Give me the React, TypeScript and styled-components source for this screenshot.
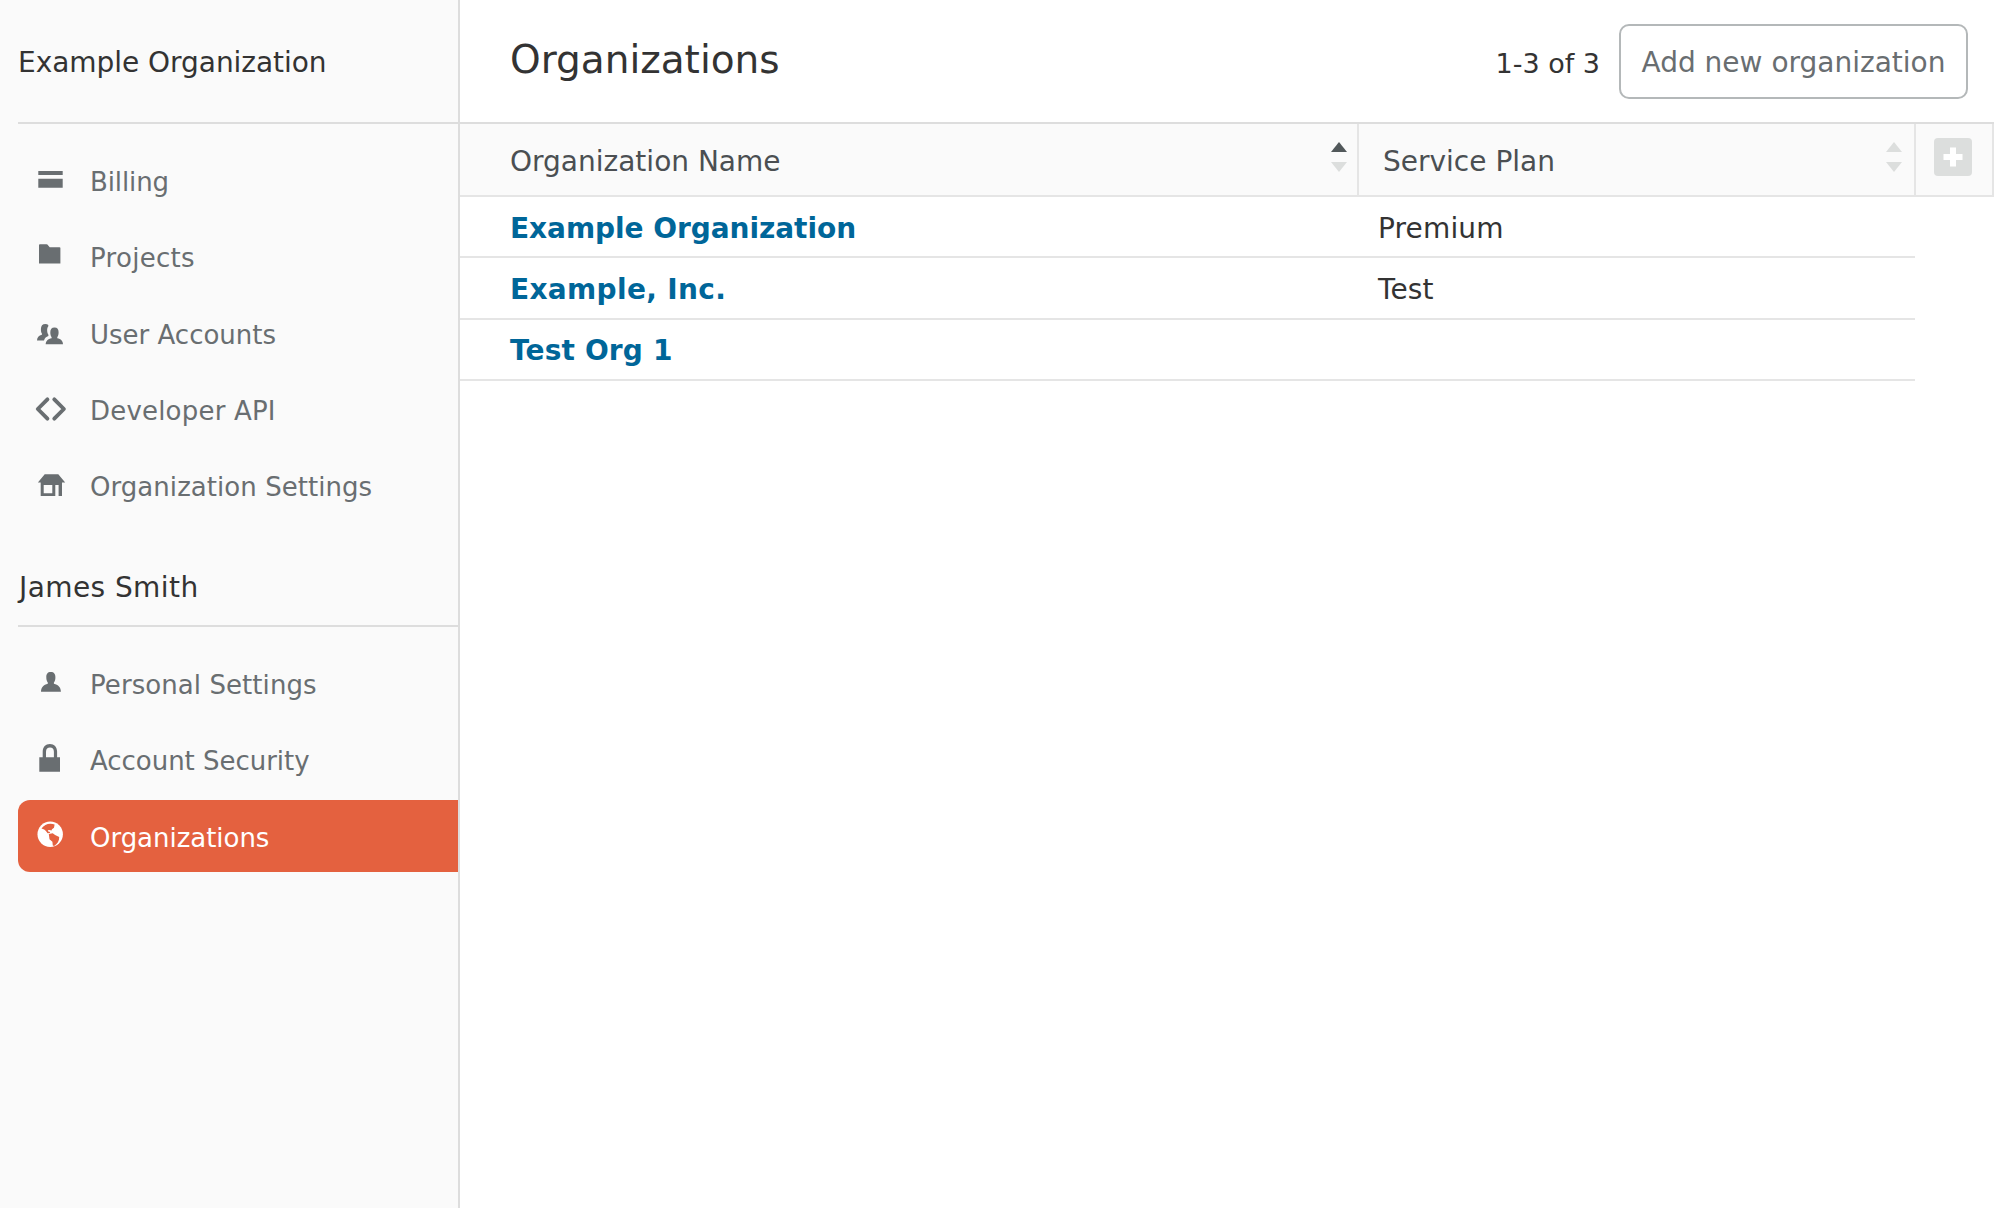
import React from "react";
import styled, { createGlobalStyle } from "styled-components";

const GlobalStyle = createGlobalStyle`
  *, *::before, *::after { box-sizing: border-box; }
  body {
    margin: 0;
    background: #fff;
    color: #333;
    font-family: Verdana, "DejaVu Sans", sans-serif;
  }
`;

const Page = styled.div`
  display: flex;
  width: 100%;
  height: 100vh;
  overflow: hidden;
`;

const Sidebar = styled.aside`
  width: 460px;
  flex: none;
  padding-left: 18px;
  background: #fafafa;
  border-right: 2px solid #ddd;
`;

const SectionTitle = styled.h2<{ $height: number; $lineHeight: number; $tracking?: number; $indent?: number }>`
  margin: 0;
  height: ${(p) => p.$height}px;
  padding-left: ${(p) => p.$indent ?? 0}px;
  border-bottom: 2px solid #ddd;
  font-size: 28px;
  font-weight: 400;
  line-height: ${(p) => p.$lineHeight}px;
  letter-spacing: ${(p) => p.$tracking ?? 0}px;
  white-space: nowrap;
`;

const NavList = styled.nav<{ $gap: number; $bottom?: number }>`
  display: flex;
  flex-direction: column;
  gap: ${(p) => p.$gap}px;
  padding-top: 20px;
  padding-bottom: ${(p) => p.$bottom ?? 0}px;
`;

const NavItem = styled.a<{ $active?: boolean }>`
  display: flex;
  align-items: center;
  gap: 24px;
  height: 72px;
  padding-left: 16px;
  border-radius: 12px 0 0 12px;
  background: ${(p) => (p.$active ? "#e4613f" : "transparent")};
  color: ${(p) => (p.$active ? "#fff" : "#696e71")};
  text-decoration: none;
`;

const NavIcon = styled.svg`
  width: 32px;
  height: 32px;
  flex: none;
  overflow: visible;
`;

const NavLabel = styled.span<{ $tracking?: number }>`
  padding-top: 4px;
  font-size: 26px;
  line-height: 32px;
  letter-spacing: ${(p) => p.$tracking ?? 0}px;
  white-space: nowrap;
`;

const Main = styled.main`
  flex: 1;
  min-width: 0;
`;

const Header = styled.header`
  display: flex;
  align-items: center;
  height: 124px;
  padding: 0 26px 0 50px;
  border-bottom: 2px solid #ddd;
`;

const Title = styled.h1`
  margin: 0;
  flex: 1;
  padding-bottom: 3px;
  font-size: 39px;
  font-weight: 400;
  line-height: 48px;
`;

const Count = styled.span`
  margin-right: 19px;
  padding-top: 6px;
  font-size: 27px;
  line-height: 32px;
`;

const AddButton = styled.button`
  width: 349px;
  height: 75px;
  padding: 4px 0 0;
  border: 2px solid #b4b8b9;
  border-radius: 10px;
  background: #fff;
  color: #696e71;
  font-family: inherit;
  font-size: 28px;
  line-height: 34px;
  white-space: nowrap;
`;

const columns = "899px 557px 78px";

const TableHead = styled.div`
  display: grid;
  grid-template-columns: ${columns};
  height: 73px;
  background: #fafafa;
  border-bottom: 2px solid #e5e5e5;
`;

const HeadCell = styled.div<{ $left: number; $right: number }>`
  display: flex;
  align-items: flex-start;
  justify-content: space-between;
  padding: 14px ${(p) => p.$right}px 0 ${(p) => p.$left}px;
  border-right: 2px solid #e5e5e5;
`;

const HeadLabel = styled.span`
  padding-top: 7px;
  color: #4b4f52;
  font-size: 28px;
  line-height: 34px;
`;

const SortIcon = styled.svg`
  width: 16px;
  height: 30px;
  margin-top: 4px;
`;

const AddColumnIcon = styled.svg`
  width: 38px;
  height: 38px;
`;

const Row = styled.div`
  display: grid;
  grid-template-columns: 918px 1fr;
  width: 1455px;
  height: 61.33px;
  padding-top: 0.66px;
  border-bottom: 2px solid #e5e5e5;
  font-size: 28px;
  line-height: 62px;
`;

const OrgLink = styled.a<{ $tracking: number }>`
  padding-left: 50px;
  color: #069;
  font-weight: 700;
  letter-spacing: ${(p) => p.$tracking}px;
  text-decoration: none;
`;

const PlanCell = styled.span<{ $tracking: number }>`
  letter-spacing: ${(p) => p.$tracking}px;
`;

const BillingIcon = () => (
  <NavIcon viewBox="0 0 32 32" fill="currentColor">
    <path d="M4.3 7h24.4v4H4.3zM4.3 14.8h24.4v9H4.3z" />
  </NavIcon>
);

const FolderIcon = () => (
  <NavIcon viewBox="0 0 32 32" fill="currentColor">
    <path d="M5 5.1q0-.9.9-.9h6.6q.5 0 .9.4l2.300 2.600h9.800q.9 0 .9.9V23.600H5z" />
  </NavIcon>
);

const UsersIcon = () => (
  <NavIcon viewBox="0 0 32 32" fill="currentColor">
    <path d="M20.5 10.500c2.900 0 4.100 2 4.100 4.800 0 2.100-.4 3.800-1.300 4.700v1.200c3.600.6 5.700 2.900 5.700 6H11.700c0-3.100 2.300-5.400 5.900-6v-1.200c-.9-.9-1.300-2.600-1.300-4.700 0-2.800 1.300-4.800 4.200-4.800z" />
    <path d="M11.400 7.100c1.200 0 2.200.3 2.900 1v1.200c-1 1.200-1.300 3-1.100 5 .1 1.600.6 2.700 1.200 3.500v1.200c-2.300.7-3.600 2-4.400 4.500H3c0-3.100 1.800-5.100 4.900-5.800v-1.100c-.7-1-1-2.400-1-4.500 0-3.100 1.500-5 4.500-5z" />
  </NavIcon>
);

const CodeIcon = () => (
  <NavIcon viewBox="0 0 32 32" fill="none" stroke="currentColor" strokeWidth="3.9" strokeLinecap="round" strokeLinejoin="round">
    <path d="M13.400 6.300 3.800 16l9.600 9.700M20.300 6.300 29.900 16l-9.600 9.700" />
  </NavIcon>
);

const StoreIcon = () => (
  <NavIcon viewBox="0 0 32 32" fill="currentColor" fillRule="evenodd">
    <path d="M10.700 5.200h13.600l6.900 8.400H28V27h-3.400V16h-3.300v11H6.700V13.600H3.900zM9.700 16v8.200h8.600V16z" />
  </NavIcon>
);

const PersonIcon = () => (
  <NavIcon viewBox="0 0 32 32" fill="currentColor">
    <path d="M16.800 5c3.300 0 4.600 2 4.600 5.200 0 2.300-.5 4.200-1.500 5.200v1.300c4.300 1 7 3.700 7 8.100H7c0-4.400 2.700-7.100 6.800-8.100v-1.300c-1-1-1.500-2.900-1.500-5.200C12.300 7 13.500 5 16.800 5z" />
  </NavIcon>
);

const LockIcon = () => (
  <NavIcon viewBox="0 0 32 32" fill="currentColor" fillRule="evenodd">
    <path d="M5.300 14.300h3.400V8.500c0-4.500 2.900-7.500 7.200-7.500s7.200 3 7.200 7.500v5.800H26V28.700H5.300zM12 14.300h7.900V8.700c0-2.800-1.500-4.200-3.900-4.200s-4 1.400-4 4.200z" />
  </NavIcon>
);

const GlobeIcon = () => (
  <NavIcon viewBox="0 0 32 32">
    <circle cx="16.2" cy="14.300" r="12.700" fill="#fff" />
    <path d="M7.500 8.600c2.300-3.300 5.200-4.800 8.900-4.800 1.600 0 3 .2 4.200.8l-.6 3.200-2 1.500-.5 1.200-2-.6-1.700.3.400 1.200 1.900.5-.3 1.200-2.200.2-1.700-2.300-1.700-1.600z" fill="#e4613f" />
    <path d="M14.800 14l3.900-.8 2.400 1.800 4.100 1.900c.2 3.800-1.900 7.100-5.100 9.100l-1.300-.4-.4-3.900-2.900-2.500z" fill="#e4613f" />
  </NavIcon>
);

const Sorter = ({ active }: { active?: boolean }) => (
  <SortIcon viewBox="0 0 16 30">
    <path d="M8 0l8 10H0z" fill={active ? "#51585a" : "#dcdedd"} />
    <path d="M0 20h16L8 30z" fill="#dcdedd" />
  </SortIcon>
);

type Entry = { label: string; Icon: React.FC; tracking?: number; active?: boolean };

const organizationNav: Entry[] = [
  { label: "Billing", Icon: BillingIcon, tracking: -0.1 },
  { label: "Projects", Icon: FolderIcon, tracking: 0.3 },
  { label: "User Accounts", Icon: UsersIcon },
  { label: "Developer API", Icon: CodeIcon, tracking: 0.2 },
  { label: "Organization Settings", Icon: StoreIcon, tracking: 0.05 },
];

const personalNav: Entry[] = [
  { label: "Personal Settings", Icon: PersonIcon, tracking: 0.07 },
  { label: "Account Security", Icon: LockIcon, tracking: -0.03 },
  { label: "Organizations", Icon: GlobeIcon, tracking: -0.03, active: true },
];

const organizations = [
  { name: "Example Organization", tracking: -0.05, plan: "Premium", planTracking: 0.15 },
  { name: "Example, Inc.", tracking: 0.33, plan: "Test", planTracking: 0.1 },
  { name: "Test Org 1", tracking: 0.15, plan: "", planTracking: 0 },
];

const renderEntry = ({ label, Icon, tracking, active }: Entry) => (
  <NavItem key={label} $active={active}>
    <Icon />
    <NavLabel $tracking={tracking}>{label}</NavLabel>
  </NavItem>
);

export default function App() {
  return (
    <>
      <GlobalStyle />
      <Page>
        <Sidebar>
          <SectionTitle $height={124} $lineHeight={126} $tracking={-0.04}>Example Organization</SectionTitle>
          <NavList $gap={4.25} $bottom={37}>{organizationNav.map(renderEntry)}</NavList>
          <SectionTitle $height={69} $lineHeight={60} $tracking={0.42} $indent={1}>James Smith</SectionTitle>
          <NavList $gap={4.4}>{personalNav.map(renderEntry)}</NavList>
        </Sidebar>
        <Main>
          <Header>
            <Title>Organizations</Title>
            <Count>1-3 of 3</Count>
            <AddButton>Add new organization</AddButton>
          </Header>
          <TableHead>
            <HeadCell $left={50} $right={10}>
              <HeadLabel>Organization Name</HeadLabel>
              <Sorter active />
            </HeadCell>
            <HeadCell $left={24} $right={12}>
              <HeadLabel>Service Plan</HeadLabel>
              <Sorter />
            </HeadCell>
            <HeadCell $left={18} $right={0}>
              <AddColumnIcon viewBox="0 0 38 38">
                <rect width="38" height="38" rx="4" fill="#dcdedd" />
                <path d="M16 9.500h6v6.500h6.500v6H22v6.500h-6V22H9.500v-6H16z" fill="#fff" />
              </AddColumnIcon>
            </HeadCell>
          </TableHead>
          {organizations.map((org) => (
            <Row key={org.name}>
              <OrgLink $tracking={org.tracking}>{org.name}</OrgLink>
              <PlanCell $tracking={org.planTracking}>{org.plan}</PlanCell>
            </Row>
          ))}
        </Main>
      </Page>
    </>
  );
}
